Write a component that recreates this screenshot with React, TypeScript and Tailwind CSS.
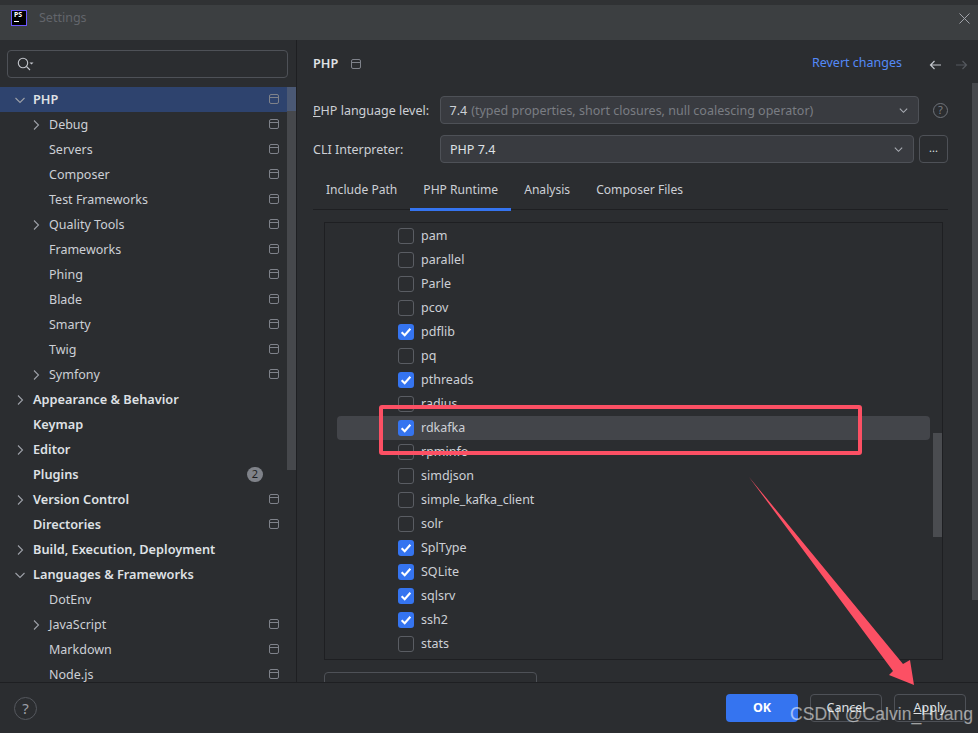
import React from "react";

const font = { fontFamily: '"Noto Sans", "Noto Sans CJK SC", sans-serif' };

function Chevron({ dir }: { dir: "right" | "down" }) {
  return (
    <svg width="12" height="12" viewBox="0 0 12 12" fill="none" stroke="#9da0a8" strokeWidth="1.1">
      {dir === "right" ? <path d="M4 1.5 L8.5 6 L4 10.5" /> : <path d="M1.5 4 L6 8.5 L10.5 4" />}
    </svg>
  );
}

function ProjIcon({ className = "" }: { className?: string }) {
  return (
    <svg width="10" height="10" viewBox="0 0 10 10" fill="none" stroke="#7f828a" strokeWidth="1" className={className}>
      <rect x="0.5" y="0.5" width="9" height="9" rx="1.5" />
      <path d="M0.5 3.5 H9.5" />
    </svg>
  );
}

type Row = { t: string; level: 0 | 1; bold?: boolean; arrow?: "right" | "down"; icon?: boolean; badge?: string; sel?: boolean };

const rows: Row[] = [
  { t: "PHP", level: 0, bold: true, arrow: "down", icon: true, sel: true },
  { t: "Debug", level: 1, arrow: "right", icon: true },
  { t: "Servers", level: 1, icon: true },
  { t: "Composer", level: 1, icon: true },
  { t: "Test Frameworks", level: 1, icon: true },
  { t: "Quality Tools", level: 1, arrow: "right", icon: true },
  { t: "Frameworks", level: 1, icon: true },
  { t: "Phing", level: 1, icon: true },
  { t: "Blade", level: 1, icon: true },
  { t: "Smarty", level: 1, icon: true },
  { t: "Twig", level: 1, icon: true },
  { t: "Symfony", level: 1, arrow: "right", icon: true },
  { t: "Appearance & Behavior", level: 0, bold: true, arrow: "right" },
  { t: "Keymap", level: 0, bold: true },
  { t: "Editor", level: 0, bold: true, arrow: "right" },
  { t: "Plugins", level: 0, bold: true, badge: "2" },
  { t: "Version Control", level: 0, bold: true, arrow: "right", icon: true },
  { t: "Directories", level: 0, bold: true, icon: true },
  { t: "Build, Execution, Deployment", level: 0, bold: true, arrow: "right" },
  { t: "Languages & Frameworks", level: 0, bold: true, arrow: "down" },
  { t: "DotEnv", level: 1 },
  { t: "JavaScript", level: 1, arrow: "right", icon: true },
  { t: "Markdown", level: 1, icon: true },
  { t: "Node.js", level: 1, icon: true },
];

const checks: [string, boolean][] = [
  ["pam", false], ["parallel", false], ["Parle", false], ["pcov", false], ["pdflib", true], ["pq", false],
  ["pthreads", true], ["radius", false], ["rdkafka", true], ["rpminfo", false], ["simdjson", false],
  ["simple_kafka_client", false], ["solr", false], ["SplType", true], ["SQLite", true], ["sqlsrv", true],
  ["ssh2", true], ["stats", false],
];

function SideRow({ r }: { r: Row }) {
  return (
    <div className={`h-[25px] shrink-0 flex items-center pr-[8px] ${r.sel ? "bg-[#2e436e]" : ""}`}>
      <div className={`flex items-center justify-center w-[12px] shrink-0 ${r.level === 1 ? "ml-[30px] mr-[7px]" : "ml-[14px] mr-[7px]"}`}>
        {r.arrow && <Chevron dir={r.arrow} />}
      </div>
      <span className={`flex-1 whitespace-nowrap ${r.bold ? "text-[12.75px] font-semibold text-[#dfe1e5]" : "text-[12.5px] pt-[2px] text-[#cdd0d6]"}`}>{r.t}</span>
      {r.icon && <ProjIcon className="-mt-[1px]" />}
      {r.badge && (
        <span className="w-[16px] h-[15px] mr-[16px] rounded-full bg-[#7f8289] text-[#1e1f22] text-[11px] flex items-center justify-center">{r.badge}</span>
      )}
    </div>
  );
}

function Check({ t, on }: { t: string; on: boolean }) {
  return (
    <div className={`h-[24px] shrink-0 flex items-center pl-[61px] ml-[12px] mr-[12px] rounded ${t === "rdkafka" ? "bg-[#43454a]" : ""}`}>
      <span className={`w-[16px] h-[16px] rounded-[3px] flex items-center justify-center shrink-0 ${on ? "bg-[#3574f0]" : "border border-[#5a5d63]"}`}>
        {on && (
          <svg width="12" height="12" viewBox="0 0 11 11" fill="none" stroke="#ffffff" strokeWidth="1.9">
            <path d="M1.5 5.8 L4.3 8.5 L9.5 2.5" />
          </svg>
        )}
      </span>
      <span className="ml-[7px] text-[12.5px] text-[#cdd0d6]">{t}</span>
    </div>
  );
}

function Caret() {
  return (
    <svg width="11" height="11" viewBox="0 0 12 12" fill="none" stroke="#a8abb2" strokeWidth="1.2">
      <path d="M2 4 L6 8 L10 4" />
    </svg>
  );
}

export default function App() {
  return (
    <div className="relative w-[978px] h-[733px] overflow-hidden bg-[#2b2d30] flex flex-col" style={font}>
      {/* Title bar */}
      <div className="h-[40px] shrink-0 flex flex-col bg-[#3c3f41]">
        <div className="h-[5px] bg-[#303234]" />
        <div className="flex-1 flex items-center pl-[11px] pr-[8px] pb-[9px]">
          <div className="w-[16px] h-[16px] bg-black border border-[#6b57ff] relative flex flex-col pl-[2px]">
            <span className="text-[7px] leading-[8px] font-bold text-white">PS</span>
            <span className="w-[5px] h-[1px] bg-white mt-[2px]" />
          </div>
          <span className="ml-[12px] text-[12.5px] text-[#62656b]">Settings</span>
          <svg className="ml-auto" width="11" height="11" viewBox="0 0 11 11" stroke="#a0a3a9" strokeWidth="1">
            <path d="M0.5 0.5 L10.5 10.5 M10.5 0.5 L0.5 10.5" />
          </svg>
        </div>
      </div>

      {/* Body */}
      <div className="flex-1 min-h-0 flex">
        {/* Sidebar */}
        <div className="w-[297px] shrink-0 flex flex-col border-r border-[#1e1f22] relative overflow-hidden">
          <div className="ml-[7px] mr-[8px] mt-[10px] h-[28px] shrink-0 rounded-[4px] border border-[#4e5157] flex items-center pl-[9px]">
            <svg width="17" height="15" viewBox="0 0 17 15" fill="none" stroke="#c3c6cc" strokeWidth="1.1">
              <circle cx="6" cy="6" r="4.7" />
              <path d="M9.5 9.5 L13 13" />
              <path d="M12.5 5.5 H16.5 L14.5 7.5 Z" fill="#c3c6cc" stroke="none" />
            </svg>
          </div>
          <div className="mt-[9px] flex flex-col pr-[9px]">
            {rows.map((r) => <SideRow key={r.t} r={r} />)}
          </div>
          <div className="absolute right-0 top-[47px] w-[9px] h-[383px] bg-[#46484c]">
            <div className="h-[24px] bg-[#4a5874]" />
          </div>
        </div>

        {/* Main */}
        <div className="flex-1 min-w-0 flex flex-col relative overflow-hidden pl-[16px] pr-[30px]">
          <div className="h-[47px] shrink-0 flex items-center">
            <span className="text-[12.75px] font-semibold text-[#dfe1e5]">PHP</span>
            <ProjIcon className="ml-[13px]" />
            <span className="ml-auto text-[12.5px] text-[#548af7]">Revert changes</span>
            <svg className="ml-[27px] mt-[3px] shrink-0" width="13" height="12" viewBox="0 0 13 12" fill="none" stroke="#c3c6cc" strokeWidth="1.2">
              <path d="M12 6 H1.5 M5.5 2 L1.5 6 L5.5 10" />
            </svg>
            <svg className="ml-[13px] -mr-[20px] mt-[3px] shrink-0" width="13" height="12" viewBox="0 0 13 12" fill="none" stroke="#55585e" strokeWidth="1.2">
              <path d="M1 6 H11.5 M7.5 2 L11.5 6 L7.5 10" />
            </svg>
          </div>

          <div className="h-[28px] mt-[9px] shrink-0 flex items-center">
            <span className="w-[127px] pt-[2px] text-[12.5px] text-[#cdd0d6]"><span className="underline">P</span>HP language level:</span>
            <div className="w-[481px] h-[28px] rounded-[4px] border border-[#4e5157] bg-[#393b40] flex items-center pl-[9px] pr-[9px]">
              <span className="pt-[2px] text-[12.5px] text-[#cdd0d6]">7.4</span>
              <span className="pt-[2px] ml-[4px] text-[12.5px] text-[#7a7d83]">(typed properties, short closures, null coalescing operator)</span>
              <span className="ml-auto"><Caret /></span>
            </div>
            <span className="ml-[14px] w-[15px] h-[15px] rounded-full border border-[#6f737a] text-[#7a7d83] text-[11px] flex items-center justify-center shrink-0">?</span>
          </div>

          <div className="h-[28px] mt-[11px] shrink-0 flex items-center">
            <span className="w-[127px] pt-[2px] text-[12.5px] text-[#cdd0d6]">CLI Interpreter:</span>
            <div className="w-[474px] h-[28px] rounded-[4px] border border-[#4e5157] bg-[#393b40] flex items-center pl-[9px] pr-[9px]">
              <span className="pt-[2px] text-[12.5px] text-[#dfe1e5]">PHP 7.4</span>
              <span className="ml-auto"><Caret /></span>
            </div>
            <div className="ml-[5px] w-[29px] h-[28px] rounded-[4px] border border-[#4e5157] text-[#dfe1e5] text-[11px] flex items-center justify-center pb-[2px]">...</div>
          </div>

          <div className="mt-[13px] h-[34px] shrink-0 flex border-b border-[#1e1f22] relative">
            {[["Include Path", false], ["PHP Runtime", true], ["Analysis", false], ["Composer Files", false]].map(([t, a]) => (
              <div key={t as string} className={`h-[35px] px-[13px] flex items-start pt-[5px] text-[12.1px] text-[#cdd0d6] ${a ? "border-b-[3px] border-[#3574f0]" : ""}`}>{t as string}</div>
            ))}
          </div>

          <div className="ml-[11px] mt-[12px] w-[619px] h-[438px] shrink-0 border border-[#1e1f22] relative overflow-hidden flex flex-col pt-[1px]">
            {checks.map(([t, on]) => <Check key={t} t={t} on={on} />)}
            <div className="absolute right-0 top-[210px] w-[9px] h-[104px] bg-[#4a4c50]" />
          </div>

          <div className="ml-[11px] mt-[12px] w-[213px] h-[30px] shrink-0 rounded-t-[4px] border border-[#4e5157]" />

          <div className="absolute right-0 top-[43px] w-[6px] h-[517px] bg-[#46484c]" />
        </div>
      </div>

      {/* Footer */}
      <div className="h-[51px] shrink-0 relative z-10 bg-[#2b2d30] border-t border-[#1e1f22] flex items-center pl-[14px] pr-[12px]">
        <div className="w-[23px] h-[23px] rounded-full border border-[#55585e] text-[#9da0a8] text-[15px] flex items-center justify-center">?</div>
        <button className="ml-auto w-[72px] h-[28px] rounded-[4px] bg-[#3574f0] text-white text-[12.5px] font-bold">OK</button>
        <button className="ml-[12px] w-[72px] h-[28px] rounded-[4px] border border-[#4e5157] text-[#dfe1e5] text-[12.5px]">Cancel</button>
        <button className="ml-[12px] w-[72px] h-[28px] rounded-[4px] border border-[#4e5157] text-[#dfe1e5] text-[12.5px]"><span className="underline">A</span>pply</button>
      </div>

      {/* Annotations */}
      <div className="absolute z-20 left-[379px] top-[405px] w-[483px] h-[50px] rounded-[3px] border-[4px] border-[#fc5064]" />
      <svg className="absolute z-20 left-0 top-0 pointer-events-none" width="978" height="733">
        <polygon points="749,477 903,664 910,660 914,685 889,675 893,671" fill="#fc5064" />
      </svg>
      <span className="absolute z-30 left-[790px] top-[703px] text-[17.6px] leading-[22px] text-white/55 whitespace-nowrap" style={{ fontFamily: '"Liberation Sans", sans-serif' }}>CSDN @Calvin_Huang</span>
    </div>
  );
}
